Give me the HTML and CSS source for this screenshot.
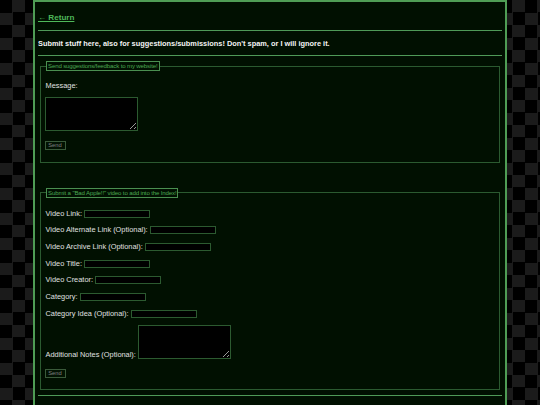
FILE: index.html
```html
<!DOCTYPE html>
<html>
<head>
<meta charset="utf-8">
<link rel="stylesheet" href="styles.css">
</head>
<body>
<div class="page">
  <a class="back" href="#">← Return</a>
  <hr class="rule rule-top">
  <p class="intro">Submit stuff here, also for suggestions/submissions! Don't spam, or I will ignore it.</p>
  <hr class="rule">
  <fieldset class="box box-msg">
    <legend>Send suggestions/feedback to my website!</legend>
    <div class="row row-first">Message:</div>
    <textarea class="area area-msg"></textarea>
    <button class="send">Send</button>
  </fieldset>
  <fieldset class="box box-video">
    <legend>Submit a "Bad Apple!!" video to add into the Index!</legend>
    <div class="row row-first">Video Link: <input class="field"></div>
    <div class="row">Video Alternate Link (Optional): <input class="field"></div>
    <div class="row">Video Archive Link (Optional): <input class="field"></div>
    <div class="row">Video Title: <input class="field"></div>
    <div class="row">Video Creator: <input class="field"></div>
    <div class="row">Category: <input class="field"></div>
    <div class="row">Category Idea (Optional): <input class="field"></div>
    <div class="row-notes">Additional Notes (Optional): <textarea class="area"></textarea></div>
    <button class="send">Send</button>
  </fieldset>
  <hr class="rule rule-end">
</div>
</body>
</html>
```
FILE: styles.css
```css
html, body {
  margin: 0;
  padding: 0;
}
body {
  height: 405px;
  overflow: hidden;
  background-color: #000;
  background-image: repeating-conic-gradient(#1b1b1b 0 25%, #000 0 50%);
  background-size: 25px 25px;
  font-family: "Liberation Sans", Arial, sans-serif;
  font-size: 7.4px;
  color: #e0e0e0;
}
.page {
  width: 464px;
  margin: 0 auto;
  padding: 11px 3px 0 3px;
  min-height: 420px;
  background: #011001;
  border: 2px solid #4f9d55;
  border-bottom: none;
}
.back {
  display: block;
  width: max-content;
  color: #4fb85a;
  font-weight: bold;
  font-size: 8.1px;
  text-decoration: underline;
  line-height: 10px;
}
.rule {
  border: none;
  border-top: 1px solid #4f9a58;
  margin: 0;
  height: 0;
}
.rule-top {
  margin-top: 7px;
}
.rule-end {
  margin-top: 5px;
}
.intro {
  font-weight: bold;
  margin: 8px 0 7px 0;
  line-height: 9px;
  color: #f4f4f4;
}
.box {
  margin: 5px 2px 0 2px;
  padding: 0 5px 12px 3.5px;
  border: 1px solid #2b5a30;
}
.box-video {
  margin-top: 25px;
  padding-bottom: 11px;
}
legend {
  color: #4aa852;
  border: 1px solid #4a8f50;
  padding: 0 1px;
  line-height: 8px;
  font-size: 6.1px;
  letter-spacing: -0.15px;
  margin-left: 1.5px;
}
.row {
  margin-top: 7.7px;
  line-height: 9px;
  height: 9px;
  padding-left: 1px;
}
.row-first {
  margin-top: 11px;
}
.box-msg .row-first {
  margin-top: 10px;
}
.field {
  box-sizing: border-box;
  width: 66px;
  height: 8px;
  padding: 0;
  margin: 0;
  background: #000;
  border: 1px solid #2c5a30;
  vertical-align: middle;
}
.area {
  box-sizing: border-box;
  width: 93px;
  height: 34px;
  padding: 0;
  margin: 0;
  background: #000;
  border: 1px solid #2c5a30;
  vertical-align: bottom;
  resize: both;
}
.area-msg {
  display: block;
  margin-top: 6.5px;
}
.row-notes {
  margin-top: 7.5px;
  line-height: 9px;
  height: 34px;
  padding-left: 1px;
}
.row-notes .area {
  vertical-align: -2px;
}
.send {
  display: block;
  box-sizing: border-box;
  width: 21px;
  height: 9px;
  margin-top: 10px;
  font-family: "Liberation Sans", sans-serif;
  font-size: 5.8px;
  color: #808080;
  background: #021202;
  border: 1px solid #3a5a3a;
  padding: 0;
  line-height: 7px;
}
```
